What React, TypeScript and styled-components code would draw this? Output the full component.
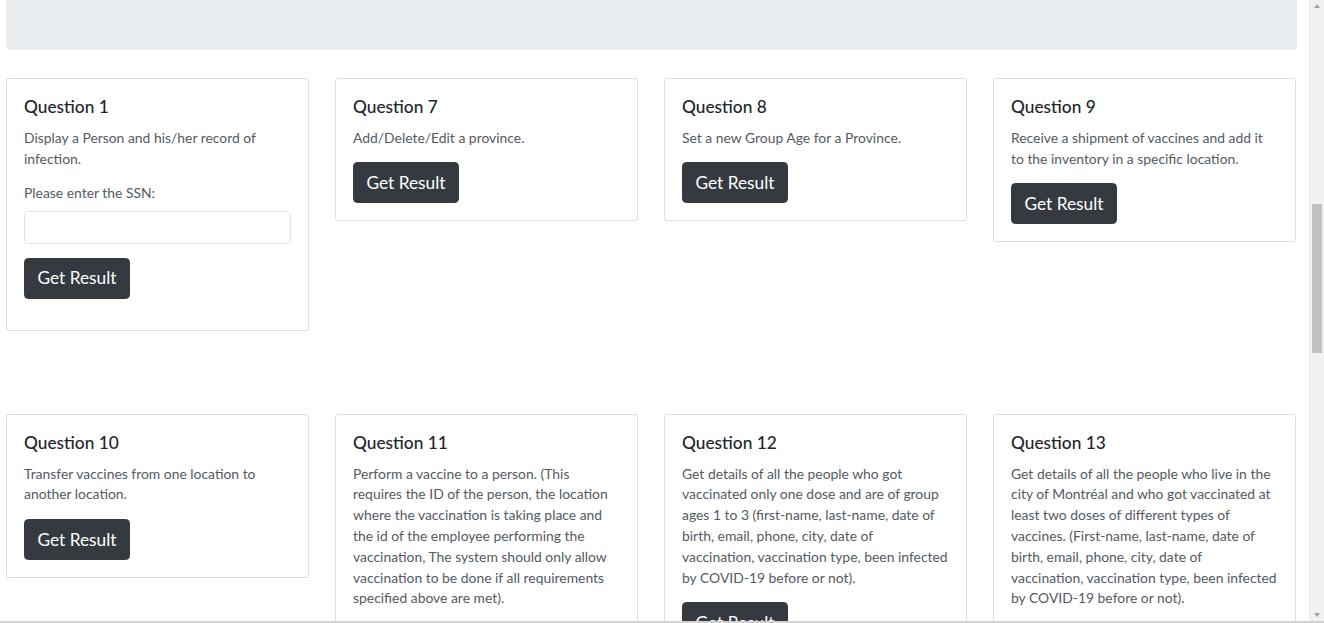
import React from "react";
import styled, { createGlobalStyle } from "styled-components";

const GlobalStyle = createGlobalStyle`
  html, body {
    margin: 0;
    padding: 0;
    background: #ffffff;
    overflow: hidden;
  }
  body {
    font-family: "Lato", "Open Sans", "Noto Sans", sans-serif;
    color: #212529;
  }
  * { box-sizing: border-box; }
`;

const Page = styled.div`
  padding: 0 27px 0 6px;
  width: 1324px;
  height: 623px;
  overflow: hidden;
`;

const Jumbotron = styled.div`
  height: 50px;
  background: #e9ecef;
  border-radius: 0 0 4px 4px;
  margin-bottom: 28px;
`;

const Grid = styled.div`
  display: grid;
  grid-template-columns: repeat(4, 303px);
  column-gap: 26px;
  row-gap: 83px;
  align-items: start;
`;

const Card = styled.div`
  border: 1px solid rgba(0, 0, 0, 0.125);
  border-radius: 3.5px;
  padding: 17px;
  background: #fff;
`;

const Title = styled.h5`
  font-size: 17.3px;
  font-weight: 500;
  line-height: 21.4px;
  margin: 0 0 10.4px;
  color: #212529;
`;

const Text = styled.p`
  font-size: 13.9px;
  line-height: 20.8px;
  white-space: pre;
  margin: 0 0 13.9px;
  color: #555a5f;
`;

const Form = styled.form`
  margin: 0 0 13.9px;
`;

const FormGroup = styled.div`
  margin-bottom: 13.9px;
`;

const Label = styled.label`
  display: block;
  font-size: 13.9px;
  line-height: 20.8px;
  margin-bottom: 7px;
  color: #555a5f;
`;

const Input = styled.input`
  display: block;
  width: 100%;
  height: 33px;
  border: 1px solid #dfe3e7;
  border-radius: 3.5px;
  padding: 5px 10px;
  font: inherit;
  font-size: 13.9px;
  outline: none;
`;

const Button = styled.button`
  display: inline-block;
  background: #343a40;
  color: #ffffff;
  border: 1px solid #343a40;
  border-radius: 4.3px;
  font-family: inherit;
  font-size: 17.3px;
  line-height: 26px;
  padding: 6.5px 12.5px;
  cursor: pointer;
`;

const ScrollTrack = styled.div`
  position: fixed;
  top: 0;
  right: 0;
  width: 15px;
  height: 621px;
  background: #f1f1f1;
  border-left: 1px solid #ececec;
`;

const Thumb = styled.div`
  position: absolute;
  left: 2px;
  right: 2px;
  top: 204px;
  height: 149px;
  background: #c1c1c1;
`;

const Arrow = styled.div<{ $down?: boolean }>`
  position: absolute;
  left: 4px;
  ${(p) => (p.$down ? "bottom: 4px;" : "top: 4px;")}
  width: 0;
  height: 0;
  border-left: 3.5px solid transparent;
  border-right: 3.5px solid transparent;
  ${(p) =>
    p.$down
      ? "border-top: 4px solid #a3a3a3;"
      : "border-bottom: 4px solid #a3a3a3;"}
`;

const BottomEdge = styled.div`
  position: fixed;
  left: 0;
  right: 0;
  bottom: 0;
  height: 2px;
  background: #d0d0d0;
`;

type Q = { n: number; text: string; ssn?: boolean };

const questions: Q[] = [
  { n: 1, text: "Display a Person and his/her record of\ninfection.", ssn: true },
  { n: 7, text: "Add/Delete/Edit a province." },
  { n: 8, text: "Set a new Group Age for a Province." },
  { n: 9, text: "Receive a shipment of vaccines and add it\nto the inventory in a specific location." },
  { n: 10, text: "Transfer vaccines from one location to\nanother location." },
  {
    n: 11,
    text: [
      "Perform a vaccine to a person. (This",
      "requires the ID of the person, the location",
      "where the vaccination is taking place and",
      "the id of the employee performing the",
      "vaccination, The system should only allow",
      "vaccination to be done if all requirements",
      "specified above are met).",
    ].join("\n"),
  },
  {
    n: 12,
    text: [
      "Get details of all the people who got",
      "vaccinated only one dose and are of group",
      "ages 1 to 3 (first-name, last-name, date of",
      "birth, email, phone, city, date of",
      "vaccination, vaccination type, been infected",
      "by COVID-19 before or not).",
    ].join("\n"),
  },
  {
    n: 13,
    text: [
      "Get details of all the people who live in the",
      "city of Montréal and who got vaccinated at",
      "least two doses of different types of",
      "vaccines. (First-name, last-name, date of",
      "birth, email, phone, city, date of",
      "vaccination, vaccination type, been infected",
      "by COVID-19 before or not).",
    ].join("\n"),
  },
];

function QuestionCard({ q }: { q: Q }) {
  return (
    <Card>
      <Title>Question {q.n}</Title>
      <Text>{q.text}</Text>
      {q.ssn ? (
        <Form onSubmit={(e) => e.preventDefault()}>
          <FormGroup>
            <Label>Please enter the SSN:</Label>
            <Input type="text" />
          </FormGroup>
          <Button type="submit">Get Result</Button>
        </Form>
      ) : (
        <Button type="button">Get Result</Button>
      )}
    </Card>
  );
}

export default function App() {
  return (
    <>
      <GlobalStyle />
      <Page>
        <Jumbotron />
        <Grid>
          {questions.map((q) => (
            <QuestionCard key={q.n} q={q} />
          ))}
        </Grid>
      </Page>
      <ScrollTrack>
        <Arrow />
        <Thumb />
        <Arrow $down />
      </ScrollTrack>
      <BottomEdge />
    </>
  );
}
